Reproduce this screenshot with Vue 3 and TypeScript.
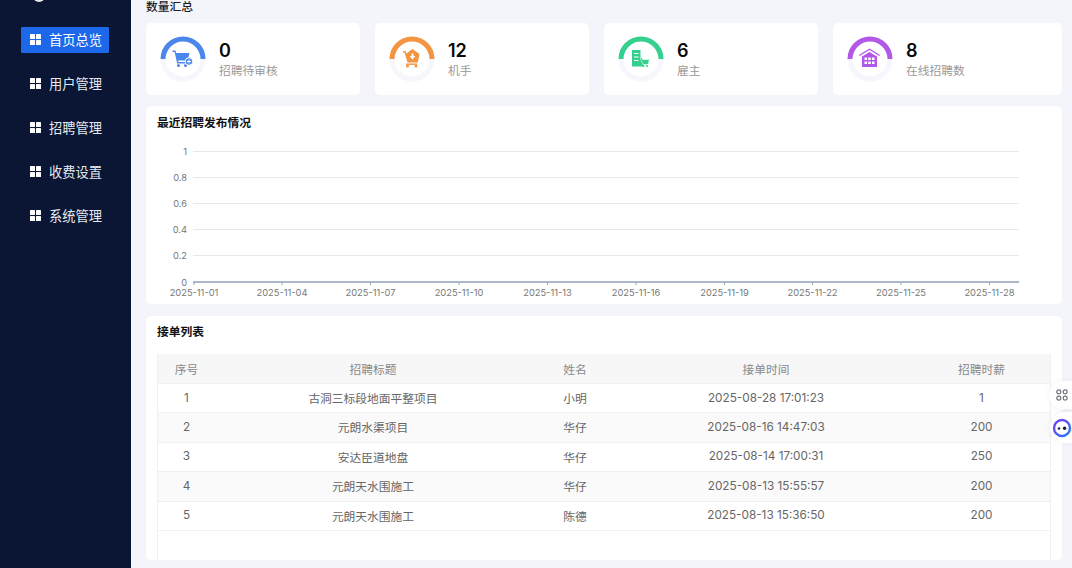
<script setup lang="ts">
const menu: string[] = ['首页总览', '用户管理', '招聘管理', '收费设置', '系统管理']
const stats = [
  { kind: 'cart', color: '#4a86ec', value: '0', label: '招聘待审核' },
  { kind: 'shop', color: '#f39543', value: '12', label: '机手' },
  { kind: 'building', color: '#33d08e', value: '6', label: '雇主' },
  { kind: 'house', color: '#b257e8', value: '8', label: '在线招聘数' },
]
const yTicks = [
  { label: '1', y: 151 },
  { label: '0.8', y: 177 },
  { label: '0.6', y: 203 },
  { label: '0.4', y: 229 },
  { label: '0.2', y: 255 },
]
const xTicks = [
  { label: '2025-11-01', x: 194 },
  { label: '2025-11-04', x: 282 },
  { label: '2025-11-07', x: 370.5 },
  { label: '2025-11-10', x: 459 },
  { label: '2025-11-13', x: 547.5 },
  { label: '2025-11-16', x: 636 },
  { label: '2025-11-19', x: 724.5 },
  { label: '2025-11-22', x: 812.5 },
  { label: '2025-11-25', x: 901 },
  { label: '2025-11-28', x: 989.5 },
]
const rows = [
  { id: 1, title: '古洞三标段地面平整项目', name: '小明', time: '2025-08-28 17:01:23', pay: 1 },
  { id: 2, title: '元朗水渠项目', name: '华仔', time: '2025-08-16 14:47:03', pay: 200 },
  { id: 3, title: '安达臣道地盘', name: '华仔', time: '2025-08-14 17:00:31', pay: 250 },
  { id: 4, title: '元朗天水围施工', name: '华仔', time: '2025-08-13 15:55:57', pay: 200 },
  { id: 5, title: '元朗天水围施工', name: '陈德', time: '2025-08-13 15:36:50', pay: 200 },
]
</script>

<template>
  <div class="page">
    <aside class="side">
      <div class="logo"></div>
      <div v-for="(m, i) in menu" :key="m" class="item" :class="{ active: i === 0 }">
        <span class="dots"><i></i><i></i><i></i><i></i></span>
        <span>{{ m }}</span>
      </div>
    </aside>

    <main class="main">
      <div class="section-title">数量汇总</div>
      <div class="stats">
        <div v-for="s in stats" :key="s.label" class="stat">
          <svg class="gauge" width="46" height="46" viewBox="0 0 46 46">
            <circle cx="23" cy="23" r="20" fill="none" stroke="#f5f7fc" stroke-width="5" />
            <path d="M3 23A20 20 0 0 1 43 23" fill="none" :stroke="s.color" stroke-width="5" />
            <g v-if="s.kind === 'cart'" :fill="s.color">
              <path d="M12.5 14.5h3l.7 2.5h13.3l-1.8 7.5H18l.4 1.5h8.6v1.4H17.2L14.6 16h-2.1z" />
              <circle cx="18.5" cy="29.5" r="1.5" />
              <circle cx="25.5" cy="29.5" r="1.5" />
              <circle cx="29" cy="25.5" r="3.8" stroke="#fff" stroke-width="1" />
              <path d="M27 25h4v1h-4zM28.5 23.5h1v4h-1z" fill="#fff" />
            </g>
            <g v-else-if="s.kind === 'shop'" :fill="s.color">
              <path d="M14 15h2.4l1 2.5L23.5 13l7 5-1.6 8.5H18.5L15.5 16.5H14z" />
              <path d="M17 27.5h11v1.4H17z" />
              <circle cx="18.5" cy="30" r="1.5" />
              <circle cx="27" cy="30" r="1.5" />
              <path d="M22.6 17.5h1.8v2.5h2l-2.9 3.4-2.9-3.4h2z" fill="#fff" />
            </g>
            <g v-else-if="s.kind === 'building'" :fill="s.color">
              <path d="M14 14h8.5v6.5l2 3.5 1 6.5H14z" />
              <path d="M16 17h4.5v1H16zM16 20.5h4.5v1H16zM16 24h4.5v1H16z" fill="#fff" />
              <path d="M22 21.5h1.8l1 2h6.7l-1.4 5h-5z" stroke="#fff" stroke-width=".6" />
              <circle cx="25.5" cy="30" r="1.1" />
              <circle cx="29" cy="30" r="1.1" />
            </g>
            <g v-else :fill="s.color">
              <path d="M22.5 12.5 33 19l-.7 1.1-9.8-6-9.8 6L12 19z" />
              <path d="M22.5 16 30 20.5v10.5H15V20.5z" />
              <path d="M17.5 21.5h2.6v2.6h-2.6zM21.2 21.5h2.6v2.6h-2.6zM24.9 21.5h2.6v2.6h-2.6zM17.5 25.5h2.6v2.6h-2.6zM21.2 25.5h2.6v2.6h-2.6zM24.9 25.5h2.6v2.6h-2.6z" fill="#fff" />
            </g>
          </svg>
          <div class="stat-text">
            <div class="value">{{ s.value }}</div>
            <div class="label">{{ s.label }}</div>
          </div>
        </div>
      </div>

      <section class="card chart-card">
        <div class="card-title">最近招聘发布情况</div>
        <svg class="chart" width="916" height="198" viewBox="146 106 916 198">
          <line v-for="t in yTicks" :key="t.y" x1="193" x2="1019" :y1="t.y + 0.5" :y2="t.y + 0.5" stroke="#e6e8ec" />
          <text v-for="t in yTicks" :key="t.label" class="tick" x="187" :y="t.y + 3.5" text-anchor="end">{{ t.label }}</text>
          <text class="tick" x="187" y="285.5" text-anchor="end">0</text>
          <line x1="193" x2="1019" y1="282" y2="282" stroke="#8fa0b8" stroke-width="1.6" />
          <line v-for="t in xTicks" :key="t.x" :x1="t.x" :x2="t.x" y1="282" y2="285" stroke="#9aa6b8" />
          <text v-for="t in xTicks" :key="t.label" class="tick" :x="t.x" y="296" text-anchor="middle">{{ t.label }}</text>
        </svg>
      </section>

      <section class="card table-card">
        <div class="card-title">接单列表</div>
        <div class="table-wrap">
          <table>
            <colgroup>
              <col class="c1" />
              <col class="c2" />
              <col class="c3" />
              <col class="c4" />
              <col />
            </colgroup>
            <thead>
              <tr>
                <th>序号</th>
                <th>招聘标题</th>
                <th>姓名</th>
                <th>接单时间</th>
                <th>招聘时薪</th>
              </tr>
            </thead>
            <tbody>
              <tr v-for="r in rows" :key="r.id">
                <td>{{ r.id }}</td>
                <td>{{ r.title }}</td>
                <td>{{ r.name }}</td>
                <td>{{ r.time }}</td>
                <td>{{ r.pay }}</td>
              </tr>
            </tbody>
          </table>
        </div>
      </section>
    </main>

    <div class="float f1">
      <svg width="12" height="12" viewBox="0 0 14 14" fill="none" stroke="#6b6f78" stroke-width="1.4">
        <rect x="1" y="1" width="4.6" height="4.6" rx="2.2" />
        <rect x="8.4" y="1" width="4.6" height="4.6" rx="2.2" />
        <rect x="1" y="8.4" width="4.6" height="4.6" rx="2.2" />
        <rect x="8.4" y="8.4" width="4.6" height="4.6" rx="2.2" />
      </svg>
    </div>
    <div class="float f2">
      <svg width="20" height="20" viewBox="0 0 20 20">
        <defs>
          <linearGradient id="botg" x1="0" y1="0" x2="1" y2="1">
            <stop offset="0" stop-color="#7a3cf0" />
            <stop offset="1" stop-color="#2a7df0" />
          </linearGradient>
        </defs>
        <circle cx="10" cy="10" r="8" fill="#fff" stroke="url(#botg)" stroke-width="2.4" />
        <circle cx="7" cy="10.5" r="1.2" fill="#161a33" />
        <circle cx="12.6" cy="10.2" r="1.7" fill="#161a33" />
      </svg>
    </div>
  </div>
</template>

<style>
html, body { margin: 0; padding: 0; overflow: hidden; }
</style>

<style scoped>
.page {
  position: relative;
  display: flex;
  width: 1072px;
  height: 568px;
  overflow: hidden;
  background: #f3f5fa;
  font-family: Inter, "Noto Sans CJK SC", sans-serif;
}
.side {
  flex: none;
  width: 131px;
  height: 568px;
  background: #0a1633;
  padding: 0 22px 0 21px;
  box-sizing: border-box;
}
.logo {
  width: 12px;
  height: 12px;
  margin: -10px 0 25px 12px;
  border-radius: 50%;
  background: #e8eaef;
}
.item {
  display: flex;
  align-items: center;
  gap: 8.5px;
  height: 26px;
  margin-bottom: 18px;
  padding: 0 0 1px 9px;
  box-sizing: border-box;
  color: #e6e9f0;
  font-size: 13.25px;
  border-radius: 1px;
}
.item.active {
  background: #1d68e8;
  color: #fff;
}
.dots {
  display: grid;
  grid-template-columns: 4.5px 4.5px;
  gap: 1.5px;
}
.dots i {
  width: 4.5px;
  height: 4.5px;
  background: #fff;
  border-radius: 0.5px;
}
.main {
  flex: 1;
  padding: 0 10px 0 15px;
  min-width: 0;
}
.section-title {
  height: 23px;
  line-height: 14px;
  font-size: 11.75px;
  font-weight: 500;
  color: #222;
}
.stats {
  display: grid;
  grid-template-columns: 214px 214px 214px 1fr;
  gap: 15px;
}
.stat {
  display: flex;
  align-items: flex-start;
  gap: 13px;
  height: 72px;
  padding: 13px 0 0 14px;
  box-sizing: border-box;
  background: #fff;
  border-radius: 5px;
}
.gauge { flex: none; }
.stat-text { padding-top: 3px; }
.value {
  height: 24px;
  line-height: 24px;
  font-size: 18px;
  font-weight: 600;
  color: #0a0a0a;
}
.label {
  margin-top: -1px;
  line-height: 18px;
  font-size: 11.75px;
  color: #999;
}
.card {
  position: relative;
  background: #fff;
  border-radius: 5px;
}
.chart-card {
  height: 198px;
  margin-top: 11px;
}
.card-title {
  padding: 8.5px 11px 0;
  line-height: 16px;
  font-size: 11.75px;
  font-weight: 700;
  color: #111;
}
.chart {
  position: absolute;
  inset: 0;
  display: block;
}
.tick {
  font-family: Inter, sans-serif;
  font-size: 9.3px;
  fill: #777;
}
.table-card {
  height: 244px;
  margin-top: 12px;
}
.table-card .card-title { padding-top: 7.5px; }
.table-wrap {
  height: 206px;
  margin: 14.5px 11px 0;
  border-left: 1px solid #f0f0f0;
  border-right: 1px solid #f0f0f0;
  box-sizing: border-box;
}
table {
  width: 100%;
  table-layout: fixed;
  border-collapse: collapse;
  font-size: 11.75px;
}
.c1 { width: 57px; }
.c2 { width: 316px; }
.c3 { width: 88px; }
.c4 { width: 294px; }
th {
  height: 28px;
  padding: 0 0 1px;
  background: #f7f7f8;
  font-weight: 400;
  color: #888;
  border-bottom: 1px solid #f0f0f0;
}
td {
  height: 27px;
  padding: 0 0 1.4px;
  text-align: center;
  color: #666;
  border-bottom: 1px solid #f0f0f0;
}
tbody tr:nth-child(even) td { background: #fafafa; }
.float {
  position: absolute;
  right: 0;
  display: flex;
  align-items: center;
  background: #fff;
  border-radius: 16px 0 0 16px;
  box-sizing: border-box;
  box-shadow: 0 0 6px rgba(30, 40, 80, 0.06);
}
.f1 { top: 381px; width: 23px; height: 28px; padding-left: 7px; }
.f2 { top: 412px; width: 22px; height: 31px; padding-left: 2px; }
</style>
